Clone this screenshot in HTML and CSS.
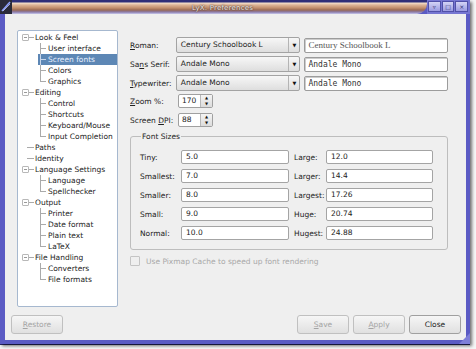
FILE: index.html
```html
<!DOCTYPE html>
<html lang="en">
<head>
    <meta charset="UTF-8">
    <title>LyX: Preferences</title>
    <link rel="stylesheet" href="styles.css">
</head>
<body>
    <div class="window">
        <div class="titlebar">
            <div class="tb-icon">
                <svg width="12" height="13" viewBox="0 0 12 13"><rect width="12" height="13" fill="#2a2a3a"/><path d="M2 11 L10 2" stroke="#8fa0ff" stroke-width="1.5"/><path d="M3 11 L10 4" stroke="#d0d8ff" stroke-width="0.7"/></svg>
            </div>
            <div class="tb-bar"><span class="tb-title">LyX: Preferences</span></div>
            <div class="tb-buttons">
                <span class="tb-btn">&#9663;</span>
                <span class="tb-btn">&#9633;</span>
                <span class="tb-btn">&#215;</span>
            </div>
        </div>
        <div class="content">
            <div class="main">
                <div class="tree">
                    <div class="node top open">Look &amp; Feel</div>
                    <div class="node child">User interface</div>
                    <div class="node child selected">Screen fonts</div>
                    <div class="node child">Colors</div>
                    <div class="node child last">Graphics</div>
                    <div class="node top open">Editing</div>
                    <div class="node child">Control</div>
                    <div class="node child">Shortcuts</div>
                    <div class="node child">Keyboard/Mouse</div>
                    <div class="node child last">Input Completion</div>
                    <div class="node top leaf">Paths</div>
                    <div class="node top leaf">Identity</div>
                    <div class="node top open">Language Settings</div>
                    <div class="node child">Language</div>
                    <div class="node child last">Spellchecker</div>
                    <div class="node top open">Output</div>
                    <div class="node child">Printer</div>
                    <div class="node child">Date format</div>
                    <div class="node child">Plain text</div>
                    <div class="node child last">LaTeX</div>
                    <div class="node top open">File Handling</div>
                    <div class="node child">Converters</div>
                    <div class="node child last">File formats</div>
                </div>
                <div class="form">
                    <div class="row">
                        <label class="lbl"><u>R</u>oman:</label>
                        <div class="combo"><span class="combo-text">Century Schoolbook L</span><span class="combo-arrow">&#9660;</span></div>
                        <div class="field serif">Century Schoolbook L</div>
                    </div>
                    <div class="row">
                        <label class="lbl">Sa<u>n</u>s Serif:</label>
                        <div class="combo"><span class="combo-text">Andale Mono</span><span class="combo-arrow">&#9660;</span></div>
                        <div class="field mono">Andale Mono</div>
                    </div>
                    <div class="row">
                        <label class="lbl"><u>T</u>ypewriter:</label>
                        <div class="combo"><span class="combo-text">Andale Mono</span><span class="combo-arrow">&#9660;</span></div>
                        <div class="field mono">Andale Mono</div>
                    </div>
                    <div class="row spin-row">
                        <label class="lbl"><u>Z</u>oom %:</label>
                        <div class="spin"><span class="spin-val">170</span><span class="spin-btns"><i>&#9650;</i><i>&#9660;</i></span></div>
                    </div>
                    <div class="row spin-row">
                        <label class="lbl">Screen <u>D</u>PI:</label>
                        <div class="spin"><span class="spin-val">88</span><span class="spin-btns"><i>&#9650;</i><i>&#9660;</i></span></div>
                    </div>
                    <fieldset class="group">
                        <legend>Font Sizes</legend>
                        <div class="sizes">
                            <label>Tiny:</label><div class="sfield">5.0</div>
                            <label>Large:</label><div class="sfield">12.0</div>
                            <label>Smallest:</label><div class="sfield">7.0</div>
                            <label>Larger:</label><div class="sfield">14.4</div>
                            <label>Smaller:</label><div class="sfield">8.0</div>
                            <label>Largest:</label><div class="sfield">17.26</div>
                            <label>Small:</label><div class="sfield">9.0</div>
                            <label>Huge:</label><div class="sfield">20.74</div>
                            <label>Normal:</label><div class="sfield">10.0</div>
                            <label>Hugest:</label><div class="sfield">24.88</div>
                        </div>
                    </fieldset>
                    <div class="check"><span class="box"></span>Use Pixmap Cache to speed up font rendering</div>
                </div>
            </div>
            <div class="buttons">
                <button class="btn" disabled><u>R</u>estore</button>
                <span class="spacer"></span>
                <button class="btn" disabled><u>S</u>ave</button>
                <button class="btn" disabled><u>A</u>pply</button>
                <button class="btn">Close</button>
            </div>
            <span class="grip"></span>
        </div>
    </div>
</body>
</html>
```
FILE: styles.css
```css
body {
    margin: 0;
    width: 476px;
    height: 349px;
    background: #f6f6f6;
    font-family: "DejaVu Sans", sans-serif;
    font-size: 7.5px;
    color: #222;
    overflow: hidden;
}
.window {
    width: 461px;
    height: 326px;
    border-left: 5px solid #5b5bc4;
    border-right: 4px solid #5b5bc4;
    border-bottom: 4px solid #5b5bc4;
    box-shadow: 2px 2px 3px rgba(0, 0, 0, 0.55), 0 1px 0 #2c2c70;
    padding-top: 14px;
    position: relative;
    background: #efefef;
}
.titlebar {
    position: absolute;
    top: 0;
    left: -5px;
    width: 470px;
    height: 14px;
    display: flex;
    background: #5b5bc4;
}
.tb-icon {
    width: 12px;
    height: 14px;
    background: #2a2a3a;
}
.tb-bar {
    flex: 1;
    display: flex;
    align-items: center;
    justify-content: center;
    background: linear-gradient(to bottom, #2e2e78 0, #2e2e78 2px, #f4e0cc 3px, #dcb496 5px, #c08e6c 8px, #9a6a54 10px, #8a7aa8 12px, #c8c8ee 14px);
    border-radius: 0 0 10px 0;
}
.tb-title {
    color: #f2ece4;
    font-size: 7px;
    letter-spacing: 0.2px;
    text-shadow: 0 0 1px #3a2a30, 0 0 2px #5a3a30;
    margin-left: 6px;
    margin-top: 1px;
}
.tb-buttons {
    width: 40px;
    display: flex;
    gap: 1px;
    padding: 1px 2px 2px 1px;
    background: #7676d2;
}
.tb-btn {
    flex: 1;
    background: linear-gradient(to bottom, #d4d4f6, #9a9ae0);
    border: 1px solid #5050a8;
    color: #303070;
    font-size: 6px;
    line-height: 9px;
    text-align: center;
}
.content {
    height: 326px;
    display: flex;
    flex-direction: column;
    position: relative;
}
.main {
    display: flex;
    padding: 16px 0 0 12px;
}
.tree {
    width: 99px;
    height: 273px;
    padding: 1px 0;
    background: #fff;
    border: 1px solid #a6b8cf;
    border-radius: 2px;
}
.node {
    height: 11px;
    line-height: 11px;
    position: relative;
    white-space: nowrap;
}
.node.top {
    padding-left: 17px;
}
.node.top::before {
    content: "";
    position: absolute;
    left: 4px;
    top: 2px;
    width: 5px;
    height: 5px;
    border: 1px solid #b8b8b8;
    border-radius: 1px;
    background: linear-gradient(#999, #999) center / 3px 1px no-repeat;
}
.node.top::after {
    content: "";
    position: absolute;
    left: 11px;
    top: 5px;
    width: 5px;
    border-top: 1px solid #aaa;
}
.node.leaf::before {
    border: none;
    background: none;
}
.node.leaf::after {
    left: 9px;
    width: 7px;
}
.node.child {
    padding-left: 30px;
}
.node.child::before {
    content: "";
    position: absolute;
    left: 22px;
    top: 0;
    height: 11px;
    border-left: 1px solid #aaa;
}
.node.child.last::before {
    height: 6px;
}
.node.child::after {
    content: "";
    position: absolute;
    left: 22px;
    top: 5px;
    width: 6px;
    border-top: 1px solid #aaa;
}
.node.selected {
    margin-left: 20px;
    padding-left: 10px;
    background: #5d87b5;
    color: #e8f0ff;
}
.node.selected::before,
.node.selected::after {
    left: 2px;
    border-color: #c8d6ea;
}
.form {
    width: 318px;
    margin-left: 12px;
    margin-top: 7px;
}
.row {
    display: flex;
    align-items: center;
    height: 16px;
    margin-bottom: 3px;
}
.lbl {
    width: 46px;
    white-space: nowrap;
}
.combo {
    width: 123px;
    height: 14px;
    display: flex;
    align-items: center;
    border: 1px solid #a3a3a3;
    border-radius: 2px;
    background: linear-gradient(to bottom, #f7f7f7, #dedede);
}
.combo-text {
    flex: 1;
    padding-left: 4px;
    border-right: 1px solid #b4b4b4;
    height: 14px;
    line-height: 14px;
}
.combo-arrow {
    width: 10px;
    text-align: center;
    font-size: 5px;
    color: #111;
}
.field {
    width: 139px;
    height: 13px;
    line-height: 13px;
    margin-left: 4px;
    padding-left: 3px;
    background: #fff;
    border: 1px solid #9c9c9c;
    border-radius: 2px;
    box-shadow: inset 1px 1px 0 #ccc;
}
.field.serif {
    font-family: "Liberation Serif", serif;
    font-size: 9px;
    color: #555;
}
.field.mono {
    font-family: "DejaVu Sans Mono", monospace;
    font-size: 8px;
    color: #333;
}
.spin-row {
    height: 14px;
    margin-bottom: 5px;
}
.spin {
    width: 33px;
    height: 12px;
    margin-left: 2px;
    display: flex;
    background: #fff;
    border: 1px solid #a0a0a0;
    border-radius: 2px;
}
.spin-val {
    flex: 1;
    padding-left: 3px;
    line-height: 12px;
}
.spin-btns {
    width: 11px;
    display: flex;
    flex-direction: column;
    background: linear-gradient(to bottom, #f4f4f4, #dcdcdc);
    border-left: 1px solid #b8b8b8;
}
.spin-btns i {
    flex: 1;
    font-style: normal;
    font-size: 4px;
    line-height: 6px;
    text-align: center;
    color: #111;
}
.group {
    margin: 3px 0 0 0;
    padding: 9px 9px 10px 8px;
    width: 299px;
    height: 97px;
    border: 1px solid #bdbdbd;
    border-radius: 3px;
}
.group legend {
    padding: 0 1px;
    margin-left: 2px;
}
.sizes {
    display: grid;
    grid-template-columns: 42px 108px 37px 107px;
    row-gap: 5px;
    align-items: center;
}
.sizes label {
    padding-left: 1px;
}
.sizes label:nth-child(4n+3) {
    padding-left: 5px;
}
.sfield {
    height: 12px;
    line-height: 12px;
    padding-left: 4px;
    background: #fff;
    border: 1px solid #a4a4a4;
    border-radius: 2px;
}
.check {
    display: flex;
    align-items: center;
    margin-top: 6px;
    color: #a8a8a8;
}
.box {
    width: 8px;
    height: 8px;
    margin-right: 6px;
    border: 1px solid #c4c4c4;
    border-radius: 1px;
}
.buttons {
    display: flex;
    gap: 4px;
    margin-top: auto;
    margin-bottom: 6px;
    padding: 0 5px 0 6px;
}
.spacer {
    flex: 1;
}
.btn {
    width: 52px;
    height: 19px;
    padding: 0;
    font-family: "DejaVu Sans", sans-serif;
    font-size: 7.5px;
    color: #222;
    border: 1px solid #a0a0a0;
    border-radius: 3px;
    background: linear-gradient(to bottom, #f6f6f6, #e0e0e0);
}
.btn:disabled {
    color: #a4a4a4;
    border-color: #c0c0c0;
}
.grip {
    position: absolute;
    right: -4px;
    bottom: -4px;
    width: 0;
    height: 0;
    border-left: 11px solid transparent;
    border-bottom: 11px solid #7e7ed8;
}
```
